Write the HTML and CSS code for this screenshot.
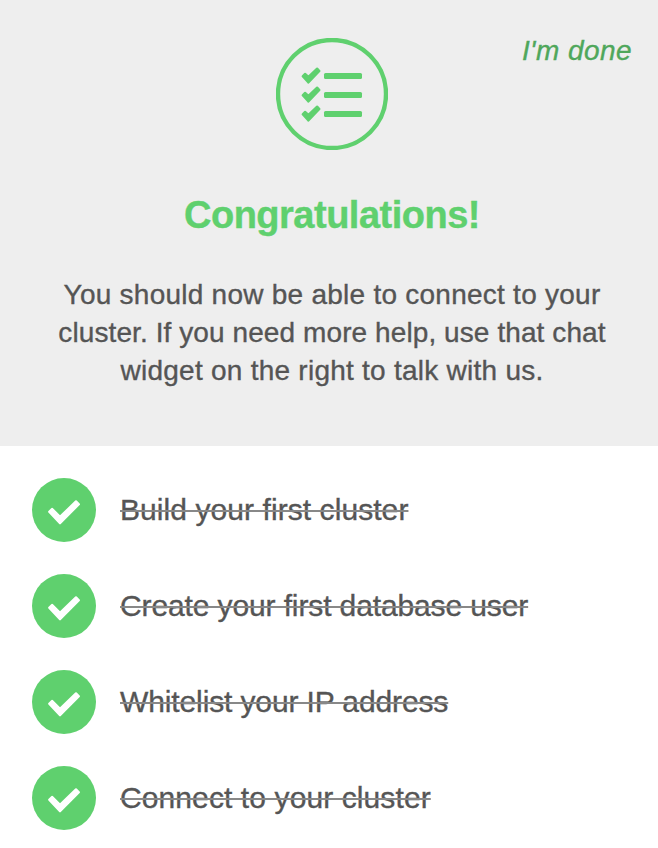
FILE: index.html
```html
<!DOCTYPE html>
<html lang="en">
<head>
<meta charset="utf-8">
<title>Congratulations</title>
<link rel="stylesheet" href="styles.css">
</head>
<body>
<svg class="defs" width="0" height="0" aria-hidden="true">
  <symbol id="check" viewBox="0 0 64 64"><path d="M17.2 33.8 20 30.9 28 38.9 44 23.3 46.9 26.2 28 45.3Z"/></symbol>
</svg>
<header class="hero">
  <a class="done">I'm done</a>
  <svg class="badge" viewBox="0 0 112 112">
    <circle cx="56" cy="56" r="54"/>
    <g class="ticks">
      <path id="tick" d="M26.7 38.3 29.1 35.8 32.4 38.8 41.1 30.6 43.4 33.1 32.4 44.6Z"/>
      <use href="#tick" y="19"/>
      <use href="#tick" y="38"/>
    </g>
    <g class="bars">
      <rect x="48" y="35" width="38" height="6" rx="1.5"/>
      <rect x="48" y="54" width="38" height="6" rx="1.5"/>
      <rect x="48" y="73" width="38" height="6" rx="1.5"/>
    </g>
  </svg>
  <h1>Congratulations!</h1>
  <p><span class="l1">You should now be able to connect to your</span><br><span class="l2">cluster. If you need more help, use that chat</span><br><span class="l3">widget on the right to talk with us.</span></p>
</header>
<ul class="steps">
  <li><span class="dot"><svg><use href="#check"/></svg></span><s class="s1">Build your first cluster</s></li>
  <li><span class="dot"><svg><use href="#check"/></svg></span><s class="s2">Create your first database user</s></li>
  <li><span class="dot"><svg><use href="#check"/></svg></span><s class="s3">Whitelist your IP address</s></li>
  <li><span class="dot"><svg><use href="#check"/></svg></span><s class="s4">Connect to your cluster</s></li>
</ul>
</body>
</html>
```
FILE: styles.css
```css
* { box-sizing: border-box; }
body {
  margin: 0;
  background: #fff;
  color: #555;
  font-family: "Liberation Sans", Arial, sans-serif;
}
.defs { position: absolute; }
.hero {
  position: relative;
  height: 446px;
  padding: 38px 0 0 6px;
  background: #eee;
  text-align: center;
}
.done {
  position: absolute;
  top: 35px;
  right: 26px;
  color: #4fa75b;
  font-size: 28px;
  font-style: italic;
  line-height: 32px;
  letter-spacing: .45px;
  -webkit-text-stroke: .35px #4fa75b;
}
.badge { display: block; width: 112px; height: 112px; margin: 0 auto; }
.badge circle { fill: none; stroke: #5fd06e; stroke-width: 4.4; }
.ticks { fill: #5fd06e; stroke: #5fd06e; stroke-width: 2.2; stroke-linejoin: round; }
.bars { fill: #5fd06e; }
h1 {
  margin: 42px 0 0;
  color: #5fd06e;
  font-size: 38px;
  line-height: 46px;
  letter-spacing: -.5px;
  -webkit-text-stroke: .4px #5fd06e;
}
p { margin: 38px 0 0; font-size: 28px; line-height: 38px; -webkit-text-stroke: .35px #555; }
.l1, .l3 { letter-spacing: .25px; }
.l2 { letter-spacing: .09px; }
.steps {
  display: flex;
  flex-direction: column;
  gap: 32px;
  margin: 0;
  padding: 32px;
  list-style: none;
}
.steps li { display: flex; align-items: center; gap: 24px; height: 64px; font-size: 30px; }
.dot { width: 64px; height: 64px; border-radius: 50%; background: #5fd06e; }
.dot svg { display: block; width: 64px; height: 64px; fill: #fff; stroke: #fff; stroke-width: 2.2; stroke-linejoin: round; }
s {
  line-height: 36px;
  text-decoration: line-through 2px #888;
  text-decoration-skip-ink: none;
  -webkit-text-stroke: .35px #555;
}
.s1 { letter-spacing: .07px; }
.s2 { letter-spacing: -.12px; }
.s3 { letter-spacing: -.12px; }
.s4 { letter-spacing: .1px; }
```
